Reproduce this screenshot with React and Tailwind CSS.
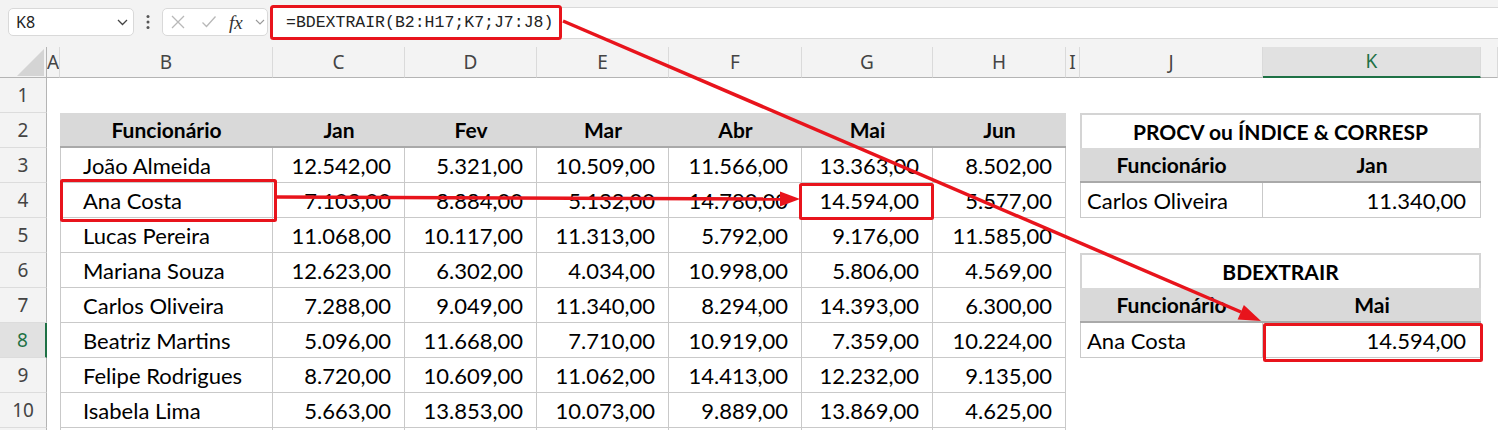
import clsx from 'clsx'

const data = [
  ['João Almeida', '12.542,00', '5.321,00', '10.509,00', '11.566,00', '13.363,00', '8.502,00'],
  ['Ana Costa', '7.103,00', '8.884,00', '5.132,00', '14.780,00', '14.594,00', '5.577,00'],
  ['Lucas Pereira', '11.068,00', '10.117,00', '11.313,00', '5.792,00', '9.176,00', '11.585,00'],
  ['Mariana Souza', '12.623,00', '6.302,00', '4.034,00', '10.998,00', '5.806,00', '4.569,00'],
  ['Carlos Oliveira', '7.288,00', '9.049,00', '11.340,00', '8.294,00', '14.393,00', '6.300,00'],
  ['Beatriz Martins', '5.096,00', '11.668,00', '7.710,00', '10.919,00', '7.359,00', '10.224,00'],
  ['Felipe Rodrigues', '8.720,00', '10.609,00', '11.062,00', '14.413,00', '12.232,00', '9.135,00'],
  ['Isabela Lima', '5.663,00', '13.853,00', '10.073,00', '9.889,00', '13.869,00', '4.625,00'],
  ['', '', '', '', '', '', ''],
]

const months = ['Jan', 'Fev', 'Mar', 'Abr', 'Mai', 'Jun']
const letters = ['A', 'B', 'C', 'D', 'E', 'F', 'G', 'H', 'I', 'J', 'K', '']

const lookups = {
  2: { type: 'title', text: 'PROCV ou ÍNDICE & CORRESP' },
  3: { type: 'head', a: 'Funcionário', b: 'Jan' },
  4: { type: 'data', a: 'Carlos Oliveira', b: '11.340,00' },
  6: { type: 'title', text: 'BDEXTRAIR' },
  7: { type: 'head', a: 'Funcionário', b: 'Mai' },
  8: { type: 'data', a: 'Ana Costa', b: '14.594,00' },
}

function FormulaBar() {
  return (
    <div className="flex h-[47px] items-start bg-[#f3f3f3] pt-[7px]">
      <div className="ml-[8px] mt-[1px] flex h-[28px] w-[126px] items-center justify-between rounded-[5px] border border-[#d9d9d9] bg-white pl-[7px] pr-[5px] font-['Noto_Sans',sans-serif] text-[16px] text-[#222]">
        K8
        <svg width="11" height="7" viewBox="0 0 11 7"><path d="M1 1l4.5 4.5L10 1" fill="none" stroke="#444" strokeWidth="1.3" /></svg>
      </div>
      <div className="flex w-[28px] justify-center pt-[7px]">
        <svg width="4" height="16" viewBox="0 0 4 16"><circle cx="2" cy="2.5" r="1.5" fill="#555" /><circle cx="2" cy="8" r="1.5" fill="#555" /><circle cx="2" cy="13.5" r="1.5" fill="#555" /></svg>
      </div>
      <div className="mt-[1px] flex h-[28px] w-[106px] items-center rounded-[5px] border border-[#d9d9d9] bg-white pl-[7px]">
        <svg width="16" height="16" viewBox="0 0 16 16"><path d="M2 2l12 12M14 2L2 14" stroke="#b8b8b8" strokeWidth="1.3" /></svg>
        <svg className="ml-[15px]" width="16" height="16" viewBox="0 0 16 16"><path d="M1.5 8.5l4 4L14.5 2.5" fill="none" stroke="#b8b8b8" strokeWidth="1.3" /></svg>
        <span className="ml-[12px] w-[18px] font-['Liberation_Serif',serif] text-[19px] italic leading-none text-[#333]">fx</span>
        <svg className="ml-[8px]" width="10" height="6" viewBox="0 0 10 6"><path d="M1 1l4 4 4-4" fill="none" stroke="#999" strokeWidth="1.1" /></svg>
      </div>
      <div className="ml-[2px] flex h-[32px] flex-1 items-center border-y border-[#d9d9d9] bg-white pl-[16px] font-['Liberation_Mono',monospace] text-[16.5px] text-[#222]">
        =BDEXTRAIR(B2:H17;K7;J7:J8)
      </div>
    </div>
  )
}

function ColumnHeaders() {
  return (
    <>
      <div className="relative border-b border-r border-[#b4b4b4] bg-[#f3f3f3]">
        <svg className="absolute left-[17px] top-[2px]" width="27" height="27" viewBox="0 0 27 27"><path d="M27 0V27H0Z" fill="#d4d4d4" /></svg>
      </div>
      {letters.map((l, i) => (
        <div
          key={i}
          className={clsx(
            'flex items-center justify-center overflow-hidden border-r border-r-[#dadada] font-[\'Noto_Sans\',sans-serif] text-[19px]',
            l === 'K' ? 'border-b-2 border-b-[#1e7145] bg-[#e1e1e1] text-[#1e7145]' : 'border-b border-b-[#b4b4b4] bg-[#f3f3f3] text-[#444]'
          )}
        >
          {l}
        </div>
      ))}
    </>
  )
}

function RowHead({ n }) {
  const active = n === 8
  return (
    <div
      className={clsx(
        'flex items-center justify-center border-b border-b-[#dcdcdc] font-[\'Noto_Sans\',sans-serif] text-[19px]',
        active ? 'border-r-2 border-r-[#1e7145] bg-[#e1e1e1] text-[#1e7145]' : 'border-r border-r-[#b4b4b4] bg-[#f3f3f3] text-[#444]'
      )}
    >
      {n < 11 ? n : ''}
    </div>
  )
}

function MainCells({ r }) {
  if (r === 1) return Array.from({ length: 7 }, (_, i) => <div key={i} />)
  if (r === 2)
    return ['Funcionário', ...months].map((h) => (
      <div key={h} className="flex items-center justify-center border-b-2 border-[#a9a9a9] bg-[#d9d9d9] text-[21px] font-bold">
        {h}
      </div>
    ))
  const row = data[r - 3]
  return row.map((v, i) => (
    <div
      key={i}
      className={clsx(
        'flex items-center border-b border-r border-[#c9c9c9] bg-white',
        i === 0 ? 'border-l pl-[22px]' : 'justify-end pr-[13px]'
      )}
    >
      {v}
    </div>
  ))
}

function LookupCells({ r }) {
  const t = lookups[r]
  if (!t) return [<div key="j" />, <div key="k" />]
  if (t.type === 'title')
    return (
      <div className="col-span-2 flex items-center justify-center border-2 border-b-0 border-[#d4d4d4] bg-white text-[21px] font-bold">
        {t.text}
      </div>
    )
  if (t.type === 'head')
    return [
      <div key="j" className="flex items-center justify-center border-b-2 border-[#a9a9a9] bg-[#d9d9d9] text-[21px] font-bold">{t.a}</div>,
      <div key="k" className="flex items-center justify-center border-b-2 border-[#a9a9a9] bg-[#d9d9d9] text-[21px] font-bold">{t.b}</div>,
    ]
  return [
    <div key="j" className="flex items-center border-b border-l border-r border-[#c9c9c9] pl-[6px]">{t.a}</div>,
    <div key="k" className="flex items-center justify-end border-b border-r border-[#c9c9c9] pr-[14px]">{t.b}</div>,
  ]
}

function Annotations() {
  const red = '#e8141c'
  return (
    <svg className="pointer-events-none absolute left-0 top-0" width="1498" height="430" viewBox="0 0 1498 430">
      <rect x="271.5" y="6.5" width="289" height="32" rx="2" fill="none" stroke={red} strokeWidth="3" />
      <rect x="61.5" y="180.5" width="214" height="40" rx="1" fill="none" stroke={red} strokeWidth="3" />
      <rect x="800.5" y="184.5" width="132" height="34" rx="1" fill="none" stroke={red} strokeWidth="3" />
      <rect x="1264.5" y="324.5" width="217" height="36" rx="1" fill="none" stroke={red} strokeWidth="3" />
      <line x1="277" y1="197" x2="782" y2="199" stroke={red} strokeWidth="3.5" />
      <polygon points="800,199 780,191.5 780,206.5" fill={red} />
      <line x1="563" y1="21" x2="1241" y2="312" stroke={red} strokeWidth="3.5" />
      <polygon points="1261,321 1237.6,319.6 1243.9,304.9" fill={red} />
    </svg>
  )
}

export default function App() {
  const rows = [1, 2, 3, 4, 5, 6, 7, 8, 9, 10, 11]
  return (
    <div className="relative h-[430px] w-[1498px] overflow-hidden bg-white font-['Lato',sans-serif] text-[22px] text-black">
      <FormulaBar />
      <div className="grid grid-cols-[47px_13px_213px_132px_132px_132px_133px_131px_133px_14px_183px_218px_17px] grid-rows-[31px_repeat(11,35px)]">
        <ColumnHeaders />
        {rows.map((r) => (
          <div key={r} className="contents">
            <RowHead n={r} />
            <div />
            <MainCells r={r} />
            <div />
            <LookupCells r={r} />
            <div />
          </div>
        ))}
      </div>
      <Annotations />
    </div>
  )
}
